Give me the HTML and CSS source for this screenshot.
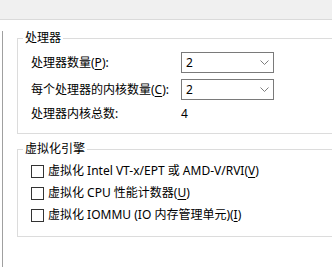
FILE: index.html
```html
<!DOCTYPE html>
<html lang="zh-CN">

<head>
    <meta charset="UTF-8">
    <meta name="viewport" content="width=device-width, initial-scale=1.0">

    <link rel="stylesheet" href="styles.css">
</head>

<body>
    <div class="topbar"></div>
    <div class="content">
        <div class="panel">
            <fieldset class="group">
                <legend>处理器</legend>
                <div class="grid">
                    <label class="label">处理器数量(<u>P</u>):</label>
                    <div class="combo">
                        <span>2</span>
                        <svg width="9" height="5" viewBox="0 0 9 5"><polyline points="0.5,0.5 4.5,4.5 8.5,0.5" fill="none" stroke="#7d7d7d" /></svg>
                    </div>
                    <label class="label">每个处理器的内核数量(<u>C</u>):</label>
                    <div class="combo">
                        <span>2</span>
                        <svg width="9" height="5" viewBox="0 0 9 5"><polyline points="0.5,0.5 4.5,4.5 8.5,0.5" fill="none" stroke="#7d7d7d" /></svg>
                    </div>
                    <span class="label total">处理器内核总数:</span>
                    <span class="value total">4</span>
                </div>
            </fieldset>

            <fieldset class="group">
                <legend>虚拟化引擎</legend>
                <div class="checks">
                    <label class="check"><span class="box"></span>虚拟化 Intel VT-x/EPT 或 AMD-V/RVI(<u>V</u>)</label>
                    <label class="check"><span class="box"></span>虚拟化 CPU 性能计数器(<u>U</u>)</label>
                    <label class="check"><span class="box"></span>虚拟化 IOMMU (IO 内存管理单元)(<u>I</u>)</label>
                </div>
            </fieldset>
        </div>
    </div>
</body>

</html>
```

FILE: styles.css
```css
html,
body {
    margin: 0;
    padding: 0;
}

body {
    width: 332px;
    height: 267px;
    overflow: hidden;
    background: #fff;
    color: #000;
    font-family: "Noto Sans", "Noto Sans CJK SC", sans-serif;
    font-size: 12px;
    line-height: 16px;
}

.topbar {
    height: 19px;
    background: #f0f0f0;
    border-bottom: 1px solid #dadada;
}

.content {
    padding-top: 11px;
    height: 236px;
}

.panel {
    margin-left: 2px;
    height: 100%;
    border-left: 1px solid #a0a0a0;
    padding-left: 14px;
}

.group {
    margin: 0 0 8px 0;
    padding: 7px 0 11px 5px;
    border: 1px solid #dcdcdc;
    border-right: none;
    min-width: 0;

    legend {
        padding: 0 2px;
        line-height: 14px;
    }

    u {
        text-decoration-thickness: 1px;
        text-underline-offset: 2px;
    }
}

.grid {
    margin-left: 8px;
    display: grid;
    grid-template-columns: 150px 93px;
    grid-template-rows: 21px 21px 16px;
    row-gap: 6px;
    align-items: center;

    .total {
        margin-top: -1px;
    }
}

.combo {
    box-sizing: border-box;
    height: 21px;
    border: 1px solid #7a7a7a;
    display: flex;
    align-items: center;
    justify-content: space-between;
    padding: 0 4px 0 4px;

    svg {
        display: block;
    }
}

.checks {
    margin-left: 8px;
    display: flex;
    flex-direction: column;
    gap: 6px;
    padding-bottom: 2px;
}

.check {
    display: flex;
    align-items: center;
    height: 16px;
    white-space: nowrap;

    .box {
        box-sizing: border-box;
        width: 13px;
        height: 13px;
        border: 1px solid #333;
        margin-right: 4px;
        flex-shrink: 0;
    }
}
```
